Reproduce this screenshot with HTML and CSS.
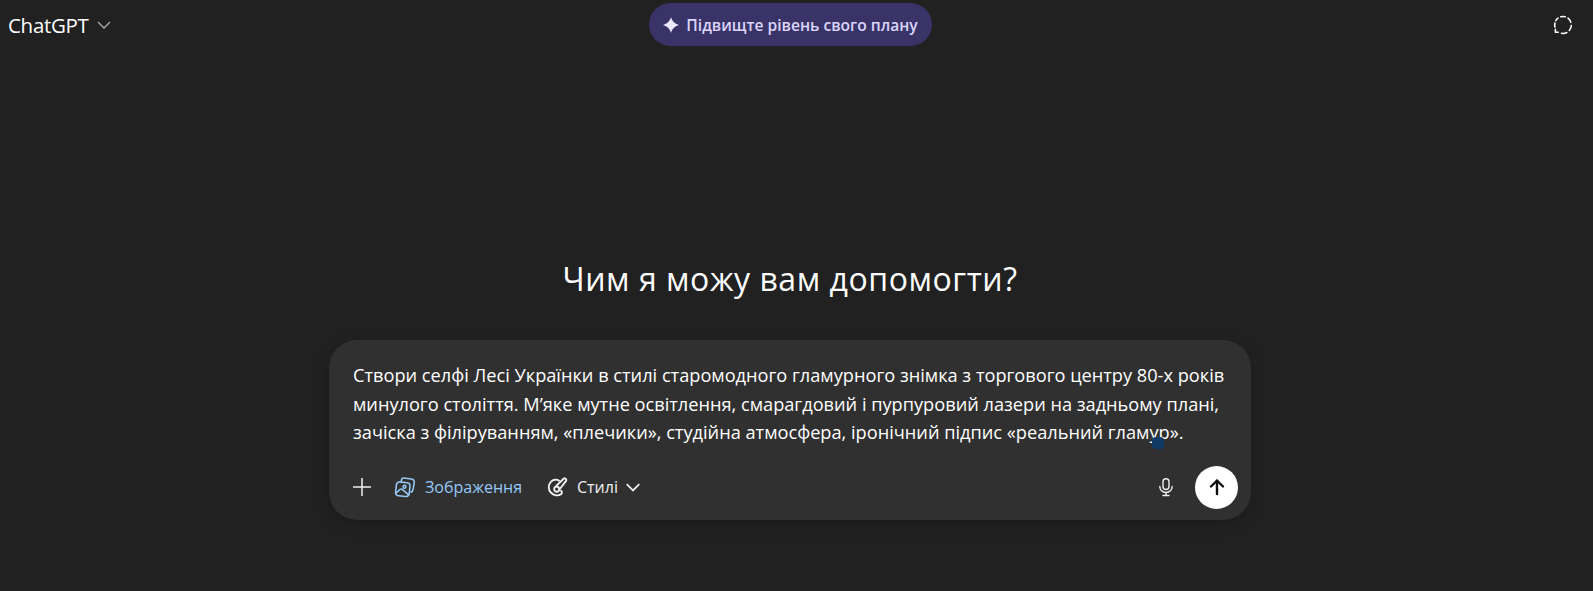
FILE: index.html
```html
<!DOCTYPE html>
<html lang="uk">
<head>
  <meta charset="UTF-8">
  <meta name="viewport" content="width=device-width, initial-scale=1.0">
  <title>ChatGPT</title>
  <link rel="stylesheet" href="styles.css">
</head>
<body>
  <header class="topbar">
    <div class="model">
      <span class="model-name">ChatGPT</span>
      <svg class="model-caret" viewBox="0 0 14 14"><path d="M1 4 7 10l6-6"/></svg>
    </div>
    <a class="upgrade" href="#">
      <svg class="upgrade-star" viewBox="0 0 16 16"><path d="M8 0c1 3.500 2.500 6 8 8-5.500 2-7 4.500-8 8-1-3.500-2.500-6-8-8 5.500-2 7-4.500 8-8z"/></svg>
      Підвищте рівень свого плану
    </a>
    <svg class="temp-chat" viewBox="0 0 20 20">
      <path d="M7.800 1.800A8.500 8.500 0 0 1 12.200 1.800M15 3.200A8.500 8.500 0 0 1 17.800 7.200M18.300 10.500A8.500 8.500 0 0 1 16.300 15.500M13.800 17.500A8.500 8.500 0 0 1 8.500 18.300M5.300 17.300H2.400V14.400M1.900 12A8.500 8.500 0 0 1 1.900 8M2.800 5.600A8.500 8.500 0 0 1 5 3.200"/>
    </svg>
  </header>

  <main class="content">
    <h1 class="greeting">Чим я можу вам допомогти?</h1>
    <section class="composer">
      <p class="prompt">Створи селфі Лесі Українки в стилі старомодного гламурного знімка з торгового центру 80-х років минулого століття. М’яке мутне освітлення, смарагдовий і пурпуровий лазери на задньому плані, зачіска з філіруванням, «плечики», студійна атмосфера, іронічний підпис «реальний гламур».</p>
      <span class="cursor-dot"></span>
      <div class="tools">
        <svg class="icon-plus" viewBox="0 0 20 20"><path d="M10 1v18M1 10h18"/></svg>
        <div class="tool tool-active">
          <svg class="tool-icon" viewBox="0 0 20 20">
            <path d="M6.500 5.500 6.800 3.500c.2-1.200 1.200-1.900 2.400-1.700l6.500 1c1.800.3 2.900 1.900 2.600 3.700l-.9 5.700c-.2 1.200-.9 2.100-2 2.500"/>
            <rect x="1.800" y="5.700" width="12.400" height="12.600" rx="3" transform="rotate(6 8 12)"/>
            <circle cx="9.500" cy="9.800" r="1.300"/>
            <path d="M2 15.500 5.500 12.200c.6-.5 1.400-.5 2 0l5.800 5"/>
          </svg>
          <span>Зображення</span>
        </div>
        <div class="tool tool-styles">
          <svg class="tool-icon" viewBox="0 0 20 20">
            <path d="M11 4.300C9 2.800 5.500 3 3.500 5.300 1 8 1 12.500 3.500 15c2.600 2.700 6.300 3.300 9 1.700 1.500-.9 1.300-2.500.2-3.300"/>
            <path d="M8 9.500 15.300 2.300c.8-.8 2.800.9 2.200 1.900L11.500 12"/>
            <circle cx="8.800" cy="12" r="2.300"/>
          </svg>
          <span>Стилі</span>
          <svg class="tool-caret" viewBox="0 0 14 14"><path d="M1.500 4.500 7 10l5.500-5.500"/></svg>
        </div>
        <svg class="icon-mic" viewBox="0 0 20 20">
          <rect x="7" y="1.800" width="6" height="10.700" rx="3"/>
          <path d="M3.800 9.500c0 3.500 2.700 6 6.200 6s6.200-2.500 6.200-6M10 15.500v3M7 18.500h6"/>
        </svg>
        <button class="send">
          <svg viewBox="0 0 20 20"><path d="M10 17V3.500M4 9.500l6-6 6 6"/></svg>
        </button>
      </div>
    </section>
  </main>
</body>
</html>
```

FILE: styles.css
```css
* { margin: 0; padding: 0; box-sizing: border-box; }
html, body { height: 100%; }
body { font-family: "Open Sans", "Noto Sans", sans-serif; background: #212121; color: #fff; overflow: hidden; }

.topbar { display: grid; grid-template-columns: 1fr auto 1fr; align-items: center; height: 49px; padding: 0 20px 0 8px; }
.model { display: flex; align-items: center; gap: 8px; }
.model-name { font-size: 20.500px; letter-spacing: -0.3px; }
.model-caret { width: 14px; height: 14px; fill: none; stroke: #aaa; stroke-width: 1.300; }
.upgrade { display: flex; align-items: center; gap: 7px; height: 43px; padding: 0 14px; border-radius: 22px; background: #3a3368; color: #dcd6fb; font-size: 15.600px; font-weight: 600; text-decoration: none; }
.upgrade-star { width: 16px; height: 16px; fill: #ece8ff; }
.temp-chat { justify-self: end; width: 20px; height: 20px; fill: none; stroke: #fff; stroke-width: 1.600; stroke-linecap: round; stroke-linejoin: round; }

.content { display: flex; flex-direction: column; align-items: center; padding: 209px 13px 0 0; }
.greeting { font-size: 32px; font-weight: 400; line-height: 42px; letter-spacing: 0.55px; margin-bottom: 40px; }
.composer { position: relative; width: 922px; height: 180px; padding: 21px 24px 0; border-radius: 28px; background: #303030; box-shadow: 0 4px 14px rgba(0, 0, 0, 0.18); }
.prompt { font-size: 18.200px; line-height: 28.500px; height: 100px; color: #fff; }
.cursor-dot { position: absolute; left: 823px; top: 97px; width: 12px; height: 12px; border-radius: 4px; background: #0f3a66; }

.tools { display: flex; align-items: center; height: 44px; margin: 4px -11px 0 -1px; }
.icon-plus { width: 20px; height: 20px; fill: none; stroke: #f0f0f0; stroke-width: 1.500; margin-right: 22px; }
.tool { display: flex; align-items: center; gap: 9px; margin-right: 25px; font-size: 16px; color: #f0f0f0; }
.tool-active { color: #96c9f7; }
.tool-styles { gap: 8px; }
.tool-styles .tool-icon { stroke-width: 1.700; }
.tool-icon { width: 22px; height: 22px; fill: none; stroke: currentColor; stroke-width: 1.400; stroke-linecap: round; stroke-linejoin: round; }
.tool-caret { width: 16px; height: 16px; margin-left: -1px; fill: none; stroke: currentColor; stroke-width: 1.500; }
.icon-mic { width: 20px; height: 20px; margin-left: auto; margin-right: 19px; fill: none; stroke: #f0f0f0; stroke-width: 1.400; stroke-linecap: round; }
.send { display: flex; align-items: center; justify-content: center; width: 43px; height: 43px; border: 0; border-radius: 50%; background: #fff; }
.send svg { width: 20px; height: 20px; fill: none; stroke: #0d0d0d; stroke-width: 2.400; stroke-linecap: round; stroke-linejoin: round; }
```
